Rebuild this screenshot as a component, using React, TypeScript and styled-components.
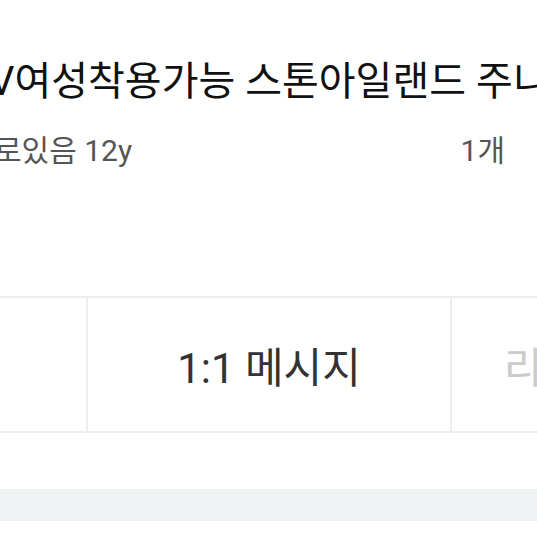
import React from 'react';
import styled, {createGlobalStyle} from 'styled-components';

const GlobalStyle = createGlobalStyle`
  html, body {
    background: #fff;
    margin: 0;
    overflow: hidden;
    padding: 0;
  }

  body {
    font-family: Roboto, "Noto Sans CJK KR", sans-serif;
  }
`;

const Page = styled.div`
  height: 537px;
  overflow: hidden;
  position: relative;
  width: 537px;
`;

const Info = styled.section`
  padding: 52px 0 0;
`;

const Title = styled.h1`
  color: #111;
  font-size: 40px;
  font-weight: 400;
  line-height: 60px;
  margin: 0 0 0 -11px;
  white-space: nowrap;
`;

const Meta = styled.div`
  align-items: center;
  color: #555;
  display: flex;
  font-size: 30px;
  height: 42px;
  justify-content: space-between;
  margin-top: 15px;
  white-space: nowrap;
`;

const MetaText = styled.span<{$offset?: number}>`
  margin-left: ${({$offset}) => $offset || 0}px;
`;

const Count = styled.span`
  margin-right: 32px;
`;

const Actions = styled.nav`
  border-bottom: 2px solid #eeeeee;
  border-top: 2px solid #eeeeee;
  display: flex;
  height: 133px;
  margin: 127px 0 0 -278px;
  width: 1092px;
`;

const Action = styled.button<{$muted?: boolean}>`
  align-items: center;
  background: #fff;
  border: 0;
  border-left: 2px solid #eeeeee;
  color: ${({$muted}) => ($muted ? '#cccccc' : '#333333')};
  display: flex;
  flex: 0 0 364px;
  font-family: Roboto, "Noto Sans CJK KR", sans-serif;
  font-size: 42px;
  justify-content: center;
  padding: 0 ${({$muted}) => ($muted ? '16px' : '0')} 0 0;
  white-space: nowrap;

  :first-child {
    border-left: 0;
  }
`;

const Band = styled.div`
  background: #eff2f3;
  height: 32px;
  margin-top: 56px;
`;

export default function App () {
  return (
    <Page>
      <GlobalStyle />
      <Info>
        <Title>V여성착용가능 스톤아일랜드 주니어 맨투맨</Title>
        <Meta>
          <MetaText $offset={-6}>로있음 12y</MetaText>
          <Count>1개</Count>
        </Meta>
      </Info>

      <Actions>
        <Action>찜하기</Action>
        <Action>1:1 메시지</Action>
        <Action $muted={true}>리뷰 작성하기</Action>
      </Actions>

      <Band />
    </Page>
  );
}
